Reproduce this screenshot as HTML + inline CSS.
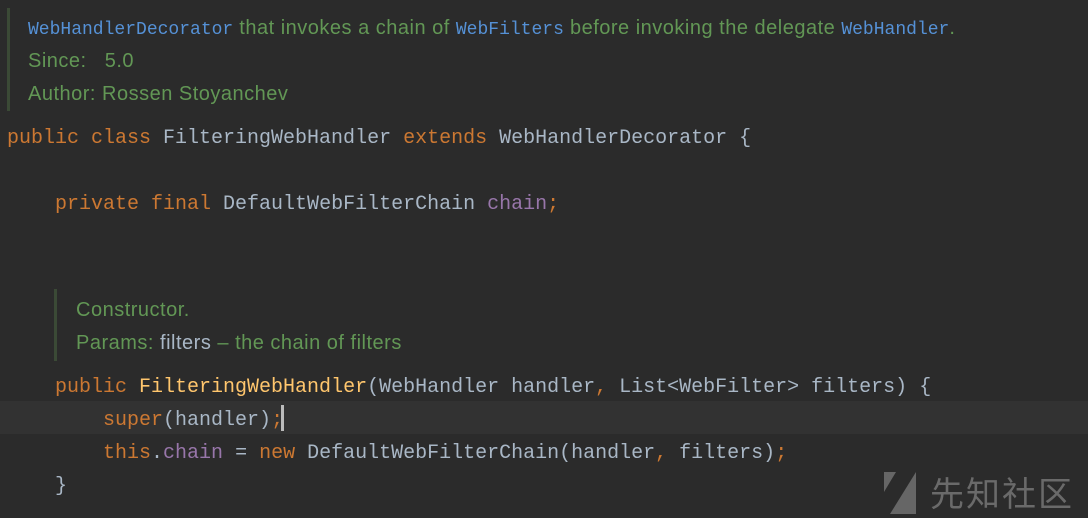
<!DOCTYPE html>
<html><head><meta charset="utf-8"><style>
body{margin:0;width:1088px;height:518px;background:#2b2b2b;overflow:hidden;position:relative;font-family:"Liberation Mono",monospace;}
.l{position:absolute;left:7px;font-size:20px;white-space:pre;color:#a9b7c6;line-height:33px;height:33px}
.k{color:#cc7832}.f{color:#9876aa}.m{color:#ffc66d}
.d{position:absolute;font-family:"Liberation Sans",sans-serif;font-size:20px;letter-spacing:0.5px;color:#629755;white-space:pre;line-height:33px}
.a{font-family:"Liberation Mono",monospace;color:#5591d6;font-size:18px;letter-spacing:0}
.bar{position:absolute;width:3px;background:#3b4a36}
</style></head><body>
<div style="position:absolute;left:0;top:401px;width:1088px;height:33px;background:#323232"></div>
<div class="bar" style="left:7px;top:8px;height:103px"></div>
<div class="d" style="left:28px;top:12px"><span class="a">WebHandlerDecorator</span> that invokes a chain of <span class="a">WebFilters</span> before invoking the delegate <span class="a">WebHandler</span>.</div>
<div class="d" style="left:28px;top:45px">Since:   5.0</div>
<div class="d" style="left:28px;top:78px">Author: Rossen Stoyanchev</div>
<div class="l" style="top:122px"><span class="k">public class </span>FilteringWebHandler <span class="k">extends </span>WebHandlerDecorator {</div>
<div class="l" style="top:188px">    <span class="k">private final </span>DefaultWebFilterChain <span class="f">chain</span><span class="k">;</span></div>
<div class="bar" style="left:54px;top:289px;height:72px"></div>
<div class="d" style="left:76px;top:294px">Constructor.</div>
<div class="d" style="left:76px;top:327px">Params: <span style="color:#a9b7c6">filters</span> – the chain of filters</div>
<div class="l" style="top:371px">    <span class="k">public </span><span class="m">FilteringWebHandler</span>(WebHandler handler<span class="k">, </span>List&lt;WebFilter&gt; filters) {</div>
<div class="l" style="top:404px">        <span class="k">super</span>(handler)<span class="k">;</span></div>
<div style="position:absolute;left:281px;top:405px;width:3px;height:26px;background:#bbb"></div>
<div class="l" style="top:437px">        <span class="k">this</span>.<span class="f">chain</span> = <span class="k">new </span>DefaultWebFilterChain(handler<span class="k">, </span>filters)<span class="k">;</span></div>
<div class="l" style="top:470px">    }</div>
<svg style="position:absolute;left:884px;top:472px" width="32" height="42"><polygon points="0,0 12,0 0,20" fill="#666"/><polygon points="32,0 32,42 6,42" fill="#666"/></svg>
<div style="position:absolute;left:930px;top:472px;font-family:'Noto Sans CJK SC',sans-serif;font-size:34px;color:#6a6a6a;line-height:40px;letter-spacing:2px">先知社区</div>
</body></html>
